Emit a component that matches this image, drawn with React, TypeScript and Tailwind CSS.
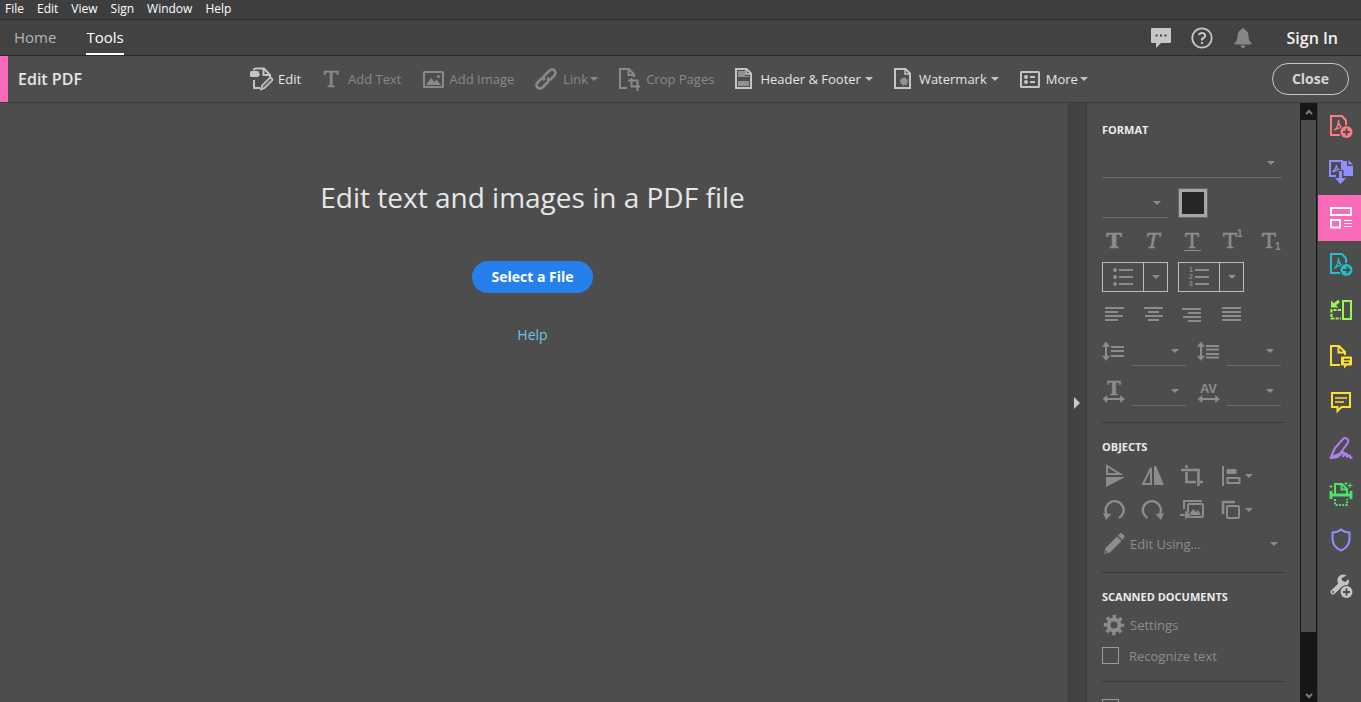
import type { ReactNode } from 'react'

const menus = ['File', 'Edit', 'View', 'Sign', 'Window', 'Help']

function Svg({ w = 24, h = 24, className = '', children }: { w?: number; h?: number; className?: string; children: ReactNode }) {
  return (
    <svg width={w} height={h} viewBox={`0 0 ${w} ${h}`} fill="none" stroke="currentColor" strokeWidth="2" className={`shrink-0 overflow-visible ${className}`} aria-hidden="true">
      {children}
    </svg>
  )
}

function Caret({ className = '' }: { className?: string }) {
  return (
    <Svg w={8} h={4} className={className}>
      <path d="M0 0h8L4 4z" fill="currentColor" stroke="none" />
    </Svg>
  )
}

const serif = { fontFamily: 'DejaVu Serif, serif', fill: 'currentColor', strokeWidth: 0.5 }
const small = { fontFamily: 'Liberation Sans, sans-serif', fontWeight: 700, fill: 'currentColor', stroke: 'none' }

// ---- toolbar icons ----

const EditIcon = () => (
  <Svg>
    <path d="M4 3.5V3q0-1.500 1.500-1.500H14l6 6.500v2M13.500 2v6H19M4 13v8h6" />
    <rect x="0" y="4" width="9" height="6" rx="1.500" fill="currentColor" stroke="none" />
    <path d="M8 7.500h2" strokeWidth="1.500" />
    <path d="m12 18.500 7.500-7.500q1.200-.8 2.400.4 1.200 1.200.2 2.400L14.500 21l-3.500 1.500z" fill="#6e6e6e" strokeWidth="1.600" />
  </Svg>
)

const TextIcon = () => (
  <Svg w={16}>
    <text x="9" y="20" textAnchor="middle" fontSize="22" {...serif}>T</text>
  </Svg>
)

const ImageIcon = () => (
  <Svg w={21}>
    <rect x="1" y="5" width="19" height="15" rx=".5" />
    <path d="m3 18 5-7 3.500 4 2-2.500L18 18z" fill="currentColor" stroke="none" />
    <circle cx="15.500" cy="9.500" r="1.500" fill="currentColor" stroke="none" />
  </Svg>
)

const LinkIcon = () => (
  <Svg w={22}>
    <g transform="rotate(-45 11 12)" strokeWidth="2.600">
      <path d="M9.500 8.500H2.500a3.500 3.500 0 0 0 0 7h7A3.500 3.500 0 0 0 13 12" />
      <path d="M12.500 15.500h7a3.500 3.500 0 0 0 0-7h-7A3.500 3.500 0 0 0 9 12" />
    </g>
  </Svg>
)

const CropPagesIcon = () => (
  <Svg w={21}>
    <path d="M8 21H1V2h9l5 5.500V10M9.500 2v6H15" />
    <path d="M12.500 11v8.500H21M9 13.500h9.500V24" />
  </Svg>
)

const HeaderFooterIcon = () => (
  <Svg w={17}>
    <path d="M3 4h7v5h4v1H3zM3 14h11v5H3z" fill="#929292" stroke="none" />
    <path d="M1 2h10.500L16 6.500V21H1z" />
    <path d="M11 2v5h5" strokeWidth="1.500" />
  </Svg>
)

const WatermarkIcon = () => (
  <Svg w={17}>
    <path d="M1 2h10.500L16 6.500V21H1z" />
    <path d="M11 2v5h5" strokeWidth="1.500" />
    <circle cx="10" cy="14.500" r="3.200" fill="#929292" stroke="#929292" strokeDasharray="1.500 1" />
  </Svg>
)

const MoreIcon = () => (
  <Svg w={20}>
    <rect x="1" y="5" width="18" height="15" rx=".5" />
    <circle cx="6" cy="10" r="2" fill="currentColor" stroke="none" />
    <circle cx="6" cy="15" r="2" fill="currentColor" stroke="none" />
    <path d="M10 10h5M10 15h5" />
  </Svg>
)

const tools = [
  { label: 'Edit', icon: <EditIcon />, on: true, gap: 'gap-1', more: false },
  { label: 'Add Text', icon: <TextIcon />, on: false, gap: 'gap-2.5', more: false },
  { label: 'Add Image', icon: <ImageIcon />, on: false, gap: 'gap-1.5', more: false },
  { label: 'Link', icon: <LinkIcon />, on: false, gap: 'gap-1.5', more: true },
  { label: 'Crop Pages', icon: <CropPagesIcon />, on: false, gap: 'gap-1.5', more: false },
  { label: 'Header & Footer', icon: <HeaderFooterIcon />, on: true, gap: 'gap-2', more: true },
  { label: 'Watermark', icon: <WatermarkIcon />, on: true, gap: 'gap-2', more: true },
  { label: 'More', icon: <MoreIcon />, on: true, gap: 'gap-1.5', more: true },
]

// ---- right rail icons ----

const Acrobat = () => (
  <path d="M5.500 16c2-1.500 4-5.500 4-9.500 0 4 2 6.500 5 7-3.500-.3-6 .5-9 2.500z" strokeWidth="1.400" strokeLinejoin="round" />
)

const CreateIcon = () => (
  <Svg>
    <path d="M11 21H2V2h11l4 4.500V12" />
    <Acrobat />
    <circle cx="17.500" cy="18" r="7" fill="#4d4d4d" stroke="none" />
    <circle cx="17.500" cy="18" r="6" fill="currentColor" stroke="none" />
    <path d="M17.500 14.500v7M14 18h7" stroke="#4d4d4d" />
  </Svg>
)

const CombineIcon = () => (
  <Svg>
    <path d="M7 16H1V1h13" />
    <path d="M3.500 12c2-2 4-4 4-7 0 3 1 5 3.500 5-3 0-5 .5-7.500 2z" strokeWidth="1.300" />
    <path d="M12 1h6v5h6v10H12zM19.500 0 24 4.500h-4.500z" fill="currentColor" stroke="none" />
    <path d="M11.500 10v9" stroke="#4d4d4d" strokeWidth="6" />
    <path d="M11.500 11v9" strokeWidth="3" />
    <path d="M6 18h11l-5.500 6z" fill="currentColor" stroke="none" />
  </Svg>
)

const EditPdfIcon = () => (
  <Svg>
    <rect x="2" y="2" width="20" height="7" />
    <rect x="2" y="14" width="9" height="7.500" />
    <path d="M15 14.500h8M15 17.500h8M15 20.500h8" strokeWidth="1" />
  </Svg>
)

const ExportIcon = () => (
  <Svg>
    <path d="M11 21H2V2h11l4 4.500V12" />
    <Acrobat />
    <circle cx="17.500" cy="18" r="7" fill="#4d4d4d" stroke="none" />
    <circle cx="17.500" cy="18" r="6" fill="currentColor" stroke="none" />
    <path d="M14 18h6M17.500 15l3 3-3 3" stroke="#4d4d4d" strokeWidth="1.800" />
  </Svg>
)

const OrganizeIcon = () => (
  <Svg>
    <rect x="14" y="3" width="8" height="18" />
    <path d="M12 12H2.500v8.500H12" strokeWidth="2.200" strokeDasharray="3.200 1.200" />
    <path d="M10 3 5 7" strokeWidth="3" />
    <path d="M2 2.500v7h7.500z" fill="currentColor" stroke="none" />
  </Svg>
)

const ReviewIcon = () => (
  <Svg>
    <path d="M11 21H2V2h8l6 6v3M9.500 2v6.500H16" />
    <path d="M13 12.500h9q1 0 1 1v7q0 1-1 1h-4l-3 3v-3h-2q-1 0-1-1v-7q0-1 1-1z" fill="currentColor" stroke="none" />
    <path d="M15 15.500h6M15 18.500h5" stroke="#4d4d4d" strokeWidth="1.400" />
  </Svg>
)

const CommentIcon = () => (
  <Svg>
    <path d="M3 3h18v14h-8.500l-4 4v-4H3z" />
    <path d="M6 8h12M6 12h9" strokeWidth="1.600" />
  </Svg>
)

const SignIcon = () => (
  <Svg>
    <path d="M1.500 22 6 12l8.500-9.500q1.500-1.200 3.500.3t.8 4L11 17.500 1.500 22c6 0 8-1 11.500-5 2-2 3 0 1 3.500 2-2.500 4-4 4-2s-1 3 .5 2 2.500-2 2.500 0 1 1 2.500 1" strokeLinejoin="round" />
  </Svg>
)

const ScanIcon = () => (
  <Svg>
    <path d="M6 12V2h7l5 5v5M12.500 2v5.500H18" />
    <path d="M2 9v8M22 9v8M2 13h20" strokeWidth="2.800" />
    <path d="M6 17v6h12v-6" strokeDasharray="2 1.300" />
    <path d="M21 1v5M18.500 3.500h5M2 3v3M.5 4.500h3M17 0v3M15.500 1.500h3" strokeWidth="1" />
  </Svg>
)

const ShieldIcon = () => (
  <Svg>
    <path d="M12 1.500c2.500 2 5 3 8.500 3V11c0 5.500-3 9-8.500 11.500C6.500 20 3.500 16.500 3.500 11V4.500c3.500 0 6-1 8.500-3z" />
  </Svg>
)

const MoreToolsIcon = () => (
  <Svg>
    <path d="M4 18 13 9.500" strokeWidth="5" strokeLinecap="round" />
    <path d="M17.500 1.500a6 6 0 1 0 2.500 7l-.3-3.500-3.500 3-3-.8-.7-3z" fill="currentColor" stroke="none" />
    <circle cx="4" cy="18" r="1" fill="#4d4d4d" stroke="none" />
    <circle cx="17.500" cy="18" r="7" fill="#4d4d4d" stroke="none" />
    <circle cx="17.500" cy="18" r="6" fill="currentColor" stroke="none" />
    <path d="M17.500 14.500v7M14 18h7" stroke="#4d4d4d" />
  </Svg>
)

const rail = [
  { name: 'Create PDF', color: 'text-[#ff7c83]', icon: <CreateIcon /> },
  { name: 'Combine Files', color: 'text-[#8f8fff]', icon: <CombineIcon /> },
  { name: 'Edit PDF', color: 'bg-[#f96bb8] text-white', icon: <EditPdfIcon /> },
  { name: 'Export PDF', color: 'text-[#23bfc8]', icon: <ExportIcon /> },
  { name: 'Organize Pages', color: 'text-[#9bf651]', icon: <OrganizeIcon /> },
  { name: 'Send for Comments', color: 'text-[#ffdf2e]', icon: <ReviewIcon /> },
  { name: 'Comment', color: 'text-[#ffdf2e]', icon: <CommentIcon /> },
  { name: 'Fill & Sign', color: 'text-[#b07ff0]', icon: <SignIcon /> },
  { name: 'Scan & OCR', color: 'text-[#4be467]', icon: <ScanIcon /> },
  { name: 'Protect', color: 'text-[#8f8fff]', icon: <ShieldIcon /> },
  { name: 'More Tools', color: 'text-[#c4c4c4]', icon: <MoreToolsIcon /> },
]

// ---- format panel ----

function Letter({ x = 12, bold = false, italic = false, children }: { x?: number; bold?: boolean; italic?: boolean; children?: ReactNode }) {
  return (
    <Svg>
      <text x={x} y="20" textAnchor="middle" fontSize="21" fontWeight={bold ? 700 : 400} fontStyle={italic ? 'italic' : 'normal'} {...serif}>T</text>
      {children}
    </Svg>
  )
}

const letters = [
  { name: 'Bold', icon: <Letter bold /> },
  { name: 'Italic', icon: <Letter italic /> },
  { name: 'Underline', icon: <Letter><path d="M4 22.500h17" strokeWidth="1" /></Letter> },
  { name: 'Superscript', icon: <Letter x={11}><text x="18" y="9" fontSize="10" {...small}>1</text></Letter> },
  { name: 'Subscript', icon: <Letter x={11}><text x="17" y="22" fontSize="10" {...small}>1</text></Letter> },
]

const aligns = [
  { name: 'Align left', d: 'M3 6h19M3 10h13M3 14h18M3 18h13' },
  { name: 'Align center', d: 'M3 6h19M7 10h11M4 14h18M7 18h11' },
  { name: 'Align right', d: 'M2 7h19M8 11h13M3 15h18M8 19h13' },
  { name: 'Justify', d: 'M3 6h19M3 10h19M3 14h19M3 18h19' },
]

function UpDown({ children }: { children: ReactNode }) {
  return (
    <Svg>
      <path d="M4 6v13" />
      <path d="M4 3 .5 7.500h7zM4 21.500.5 17h7z" fill="currentColor" stroke="currentColor" strokeWidth=".6" />
      {children}
    </Svg>
  )
}

function Wide({ children }: { children: ReactNode }) {
  return (
    <Svg>
      <path d="M4 20h15" />
      <path d="M1 20l4-3.500v7zM22.500 20l-4-3.500v7z" fill="currentColor" stroke="currentColor" strokeWidth=".6" />
      {children}
    </Svg>
  )
}

const spacings = [
  [
    { name: 'Line spacing', icon: <UpDown><path d="M9 8h13M9 12h13M9 17h13" /></UpDown> },
    { name: 'Paragraph spacing', icon: <UpDown><path d="M9 7h13M9 10.500h13M9 15h13M9 18.500h13" /></UpDown> },
  ],
  [
    { name: 'Horizontal scaling', icon: <Wide><text x="12" y="16" textAnchor="middle" fontWeight="700" fontSize="18" {...serif}>T</text></Wide> },
    { name: 'Character spacing', icon: <Wide><text x="11.500" y="14" textAnchor="middle" fontSize="13" {...small}>AV</text></Wide> },
  ],
]

const objects = [
  [
    { name: 'Flip vertical', more: false, icon: <Svg><path d="M5 2v8h13z" /><path d="M4 13h19L4 23z" fill="currentColor" stroke="none" /></Svg> },
    { name: 'Flip horizontal', more: false, icon: <Svg><path d="M2 20h8V4z" /><path d="M13 2v19h10L15 2z" fill="currentColor" stroke="none" /></Svg> },
    { name: 'Crop', more: false, icon: <Svg><path d="M1 6h17.500v16M6.500 1v3M6.500 8v10H16M20 18h3" strokeWidth="2.600" /></Svg> },
    { name: 'Align objects', more: true, icon: <Svg><path d="M4 2v20" /><rect x="7.500" y="5" width="10" height="5" rx="1" fill="currentColor" stroke="none" /><rect x="8.500" y="14" width="12" height="5" /></Svg> },
  ],
  [
    { name: 'Rotate counterclockwise', more: false, icon: <Svg><path d="M4.500 16a9 9 0 1 1 12.500 4" strokeWidth="2.400" /><path d="M1 15l8.500 1-5.500 6z" fill="currentColor" stroke="none" /></Svg> },
    { name: 'Rotate clockwise', more: false, icon: <Svg><path d="M19 16a9 9 0 1 0-12.500 4" strokeWidth="2.400" /><path d="M23 15l-8.500 1 5.500 6z" fill="currentColor" stroke="none" /></Svg> },
    { name: 'Replace image', more: false, icon: <Svg><path d="M4 11V3h18" /><rect x="8" y="6" width="15" height="13" rx="1" /><path d="m9 17 4-6 3 3 2-2 3 5z" fill="currentColor" stroke="none" /><path d="M0 17h8" stroke="#4d4d4d" strokeWidth="6" /><path d="M0 17h6" /><path d="M5 12v10l6-5z" fill="currentColor" stroke="#4d4d4d" strokeWidth=".5" /></Svg> },
    { name: 'Arrange', more: true, icon: <Svg><path d="M4 16V4h12" strokeWidth="2.600" /><rect x="8" y="8" width="12" height="12" rx="1" /></Svg> },
  ],
]

function Field({ name, className }: { name: string; className: string }) {
  return (
    <div className={`relative border-b border-[#6c6c6c] ${className}`}>
      <select aria-label={name} className="block h-full w-full appearance-none bg-transparent outline-none" />
      <Caret className="pointer-events-none absolute right-[7px] bottom-3" />
    </div>
  )
}

function ListButton({ name, children }: { name: string; children: ReactNode }) {
  return (
    <div className="flex h-[30px] w-[66px] border border-[#bdbdbd]">
      <button aria-label={name} className="flex flex-1 items-center justify-center">{children}</button>
      <button aria-label={`${name} options`} className="flex w-6 items-center justify-center border-l border-[#bdbdbd]"><Caret /></button>
    </div>
  )
}

function Heading({ children }: { children: ReactNode }) {
  return <h2 className="flex h-6 items-center text-[11px] font-bold text-[#ebebeb]">{children}</h2>
}

function Panel() {
  return (
    <aside className="min-w-0 flex-1 overflow-hidden pt-[15px] pr-[15px] pl-[15px] text-[#8c8c8c]">
      <Heading>FORMAT</Heading>
      <Field name="Font" className="mr-[3px] h-9" />
      <div className="flex h-10 items-end gap-2.5">
        <Field name="Font size" className="h-9 w-[66px]" />
        <button aria-label="Text color" className="size-[30px] border border-[#666] bg-[#a6a6a6] p-[3px]">
          <span className="block size-full bg-[#262626]" />
        </button>
      </div>
      <div className="flex h-11 items-center gap-[15px]">
        {letters.map(l => <button key={l.name} aria-label={l.name}>{l.icon}</button>)}
      </div>
      <div className="flex gap-2.5">
        <ListButton name="Bulleted list">
          <Svg>
            <path d="M8 5h14M8 12h14M8 19h14" />
            <g fill="currentColor" stroke="none"><circle cx="4" cy="5" r="2" /><circle cx="4" cy="12" r="2" /><circle cx="4" cy="19" r="2" /></g>
          </Svg>
        </ListButton>
        <ListButton name="Numbered list">
          <Svg>
            <path d="M8 5h14M8 12h14M8 19h14" />
            <g fontSize="7" {...small}><text x="2" y="7">1</text><text x="2" y="14">2</text><text x="2" y="21">3</text></g>
          </Svg>
        </ListButton>
      </div>
      <div className="flex h-11 items-center gap-[15px]">
        {aligns.map(a => <button key={a.name} aria-label={a.name}><Svg><path d={a.d} /></Svg></button>)}
      </div>
      <div className="flex flex-col gap-2.5">
        {spacings.map((row, i) => (
          <div key={i} className="flex gap-[11px]">
            {row.map(s => (
              <div key={s.name} className="flex h-[30px] items-center gap-1.5">
                {s.icon}
                <Field name={s.name} className="h-full w-[54px]" />
              </div>
            ))}
          </div>
        ))}
      </div>
      <hr className="mt-4 mb-3 border-[#3b3b3b]" />

      <Heading>OBJECTS</Heading>
      {objects.map((row, i) => (
        <div key={i} className="flex h-[34px] items-center gap-[15px]">
          {row.map(o => (
            <button key={o.name} aria-label={o.name} className="flex items-center gap-0.5">
              {o.icon}
              {o.more && <Caret />}
            </button>
          ))}
        </div>
      ))}
      <button className="flex h-[34px] w-full items-center gap-1 pr-[7px] text-[13px]">
        <Svg>
          <path d="M2 22 3.500 16 15 4.500 19.500 9 8 20.500zM16 3.500 18 1.500q1-1 2 0L22 3.500q1 1 0 2L20.500 8z" fill="currentColor" stroke="none" />
          <path d="m3 21 2.500-.7-1.800-1.800z" fill="#4d4d4d" stroke="none" />
        </Svg>
        <span className="pt-0.5">Edit Using...</span>
        <Caret className="ml-auto" />
      </button>
      <hr className="mt-[11px] mb-3 border-[#3b3b3b]" />

      <Heading>SCANNED DOCUMENTS</Heading>
      <button className="flex h-8 items-center gap-1 text-[13px]">
        <Svg>
          <circle cx="12" cy="12" r="5.500" strokeWidth="4" />
          <circle cx="12" cy="12" r="8.500" strokeWidth="3.500" strokeDasharray="3.340 3.336" strokeDashoffset="1.670" />
        </Svg>
        <span className="pt-0.5">Settings</span>
      </button>
      <label className="flex h-[29px] items-center gap-2.5 text-[13px]">
        <input type="checkbox" className="size-[17px] shrink-0 appearance-none border border-[#9b9b9b]" />
        <span className="pt-0.5">Recognize text</span>
      </label>
      <hr className="mt-[11px] mb-[17px] border-[#3b3b3b]" />
      <input type="checkbox" aria-label="Show bounding boxes" className="block size-[17px] appearance-none border border-[#9b9b9b]" />
    </aside>
  )
}

function Scrollbar() {
  return (
    <div className="flex w-[17px] shrink-0 flex-col bg-[#171717] text-[#7d7d7d]">
      <button aria-label="Scroll up" className="flex h-[17px] items-center justify-center"><Svg w={8} h={8}><path d="M1 6l3-3 3 3" /></Svg></button>
      <div className="mx-px flex-[29] bg-[#4d4d4d]" />
      <div className="flex-[3]" />
      <button aria-label="Scroll down" className="flex h-[17px] items-center justify-center"><Svg w={8} h={8}><path d="M1 4l3 3 3-3" /></Svg></button>
    </div>
  )
}

export default function App() {
  return (
    <div className="flex h-screen flex-col overflow-hidden bg-[#4d4d4d] font-['Open_Sans',sans-serif] text-[#e6e6e6]">
      <nav className="flex h-5 shrink-0 items-center gap-[13px] border-b border-[#2b2b2b] bg-[#3e3e3e] px-[5px] pb-0.5 text-[12px] text-white">
        {menus.map(m => <button key={m}>{m}</button>)}
      </nav>

      <header className="flex h-9 shrink-0 items-stretch border-b border-[#2b2b2b] bg-[#424242] pr-[23px] pl-3.5 text-[15px]">
        <button className="mr-[30px] text-[#b4b4b4]">Home</button>
        <button className="border-b-2 border-white pt-0.5 text-white">Tools</button>
        <div className="ml-auto flex items-center text-[#c6c6c6]">
          <button aria-label="Messages" className="mr-[19px]">
            <Svg w={22} h={22}>
              <path d="M2 1h18q1 0 1 1v13q0 1-1 1h-9l-5 5v-5H2q-1 0-1-1V2q0-1 1-1z" fill="currentColor" stroke="none" />
              <path d="M5.500 8.500h2M10 8.500h2M14.500 8.500h2" stroke="#424242" />
            </Svg>
          </button>
          <button aria-label="Help" className="mr-[19px]">
            <Svg w={22} h={22}>
              <circle cx="11" cy="11" r="9.700" strokeWidth="1.800" />
              <path d="M8 8q.5-2 3-2t3 2-1.500 3-1.500 2.500" />
              <path d="M11 15v2" />
            </Svg>
          </button>
          <button aria-label="Notifications" className="mr-[33px] text-[#868686]">
            <Svg w={22} h={22}>
              <path d="M11 1q1.500 0 1.500 1.500Q16.500 4 16.500 9q0 5 3 7v1.500h-17V16q3-2 3-7 0-5 4-6.500Q9.500 1 11 1zM8.500 18.500h5Q13 21 11 21t-2.500-2.500z" fill="currentColor" stroke="none" />
            </Svg>
          </button>
          <button className="text-[16px] font-semibold text-[#f0f0f0]">Sign In</button>
        </div>
      </header>

      <div className="flex h-[47px] shrink-0 items-center border-b border-[#3b3b3b] pr-3">
        <div className="flex w-[250px] items-center self-stretch border-l-8 border-[#f96bb8] pl-2.5">
          <h1 className="text-[16px] font-semibold">Edit PDF</h1>
        </div>
        <div className="flex items-center gap-[21px] text-[13px]">
          {tools.map(t => (
            <button key={t.label} disabled={!t.on} className={`flex items-center whitespace-nowrap ${t.gap} ${t.on ? 'text-[#c4c4c4]' : 'text-[#898989]'}`}>
              {t.icon}
              <span className={`pt-0.5 ${t.on ? 'text-[#e6e6e6]' : ''}`}>{t.label}</span>
              {t.more && <Caret className="-ml-1" />}
            </button>
          ))}
        </div>
        <button className="ml-auto h-8 rounded-full border border-[#c8c8c8] px-[19px] pb-0.5 text-[14px] font-bold text-[#d6d6d6]">Close</button>
      </div>

      <div className="flex min-h-0 flex-1">
        <main className="flex min-w-0 flex-1 flex-col items-center pt-[74px] pr-[3px]">
          <h2 className="text-[28px] leading-10">Edit text and images in a PDF file</h2>
          <button className="mt-11 h-8 rounded-full bg-[#2680eb] px-[19px] pb-0.5 text-[14px] font-bold text-white">Select a File</button>
          <a href="#help" className="mt-8 text-[14px] leading-5 text-[#6cc5ea]">Help</a>
        </main>
        <button aria-label="Collapse panel" className="flex w-[19px] shrink-0 items-center justify-center border-x border-[#3b3b3b] bg-[#434343] text-[#c8c8c8]">
          <Svg w={8} h={12}><path d="M0 0v12l6-6z" fill="currentColor" stroke="none" /></Svg>
        </button>
        <div className="flex w-[230px] shrink-0">
          <Panel />
          <Scrollbar />
        </div>
        <div className="flex w-11 shrink-0 flex-col border-l border-[#3b3b3b]">
          {rail.map(r => (
            <button key={r.name} aria-label={r.name} className={`flex h-[46px] shrink-0 items-center justify-center pl-0.5 ${r.color}`}>{r.icon}</button>
          ))}
        </div>
      </div>
    </div>
  )
}
